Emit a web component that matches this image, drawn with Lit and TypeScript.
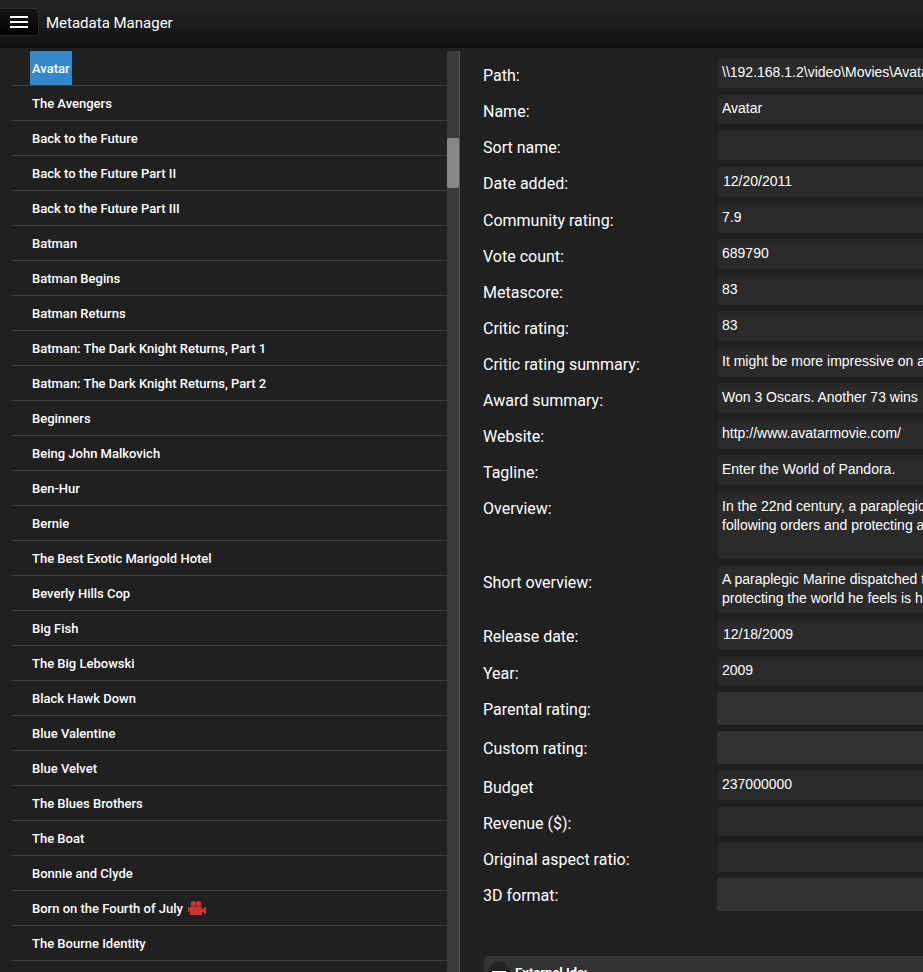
import { LitElement, html, css, nothing } from "lit";
import { customElement } from "lit/decorators.js";

interface Movie {
  title: string;
  missingTrailer?: boolean;
}

interface Field {
  id: string;
  label: string;
  kind: "text" | "date" | "select" | "long" | "short";
  value?: string;
}

const MOVIES: Movie[] = [
  { title: "Avatar" },
  { title: "The Avengers" },
  { title: "Back to the Future" },
  { title: "Back to the Future Part II" },
  { title: "Back to the Future Part III" },
  { title: "Batman" },
  { title: "Batman Begins" },
  { title: "Batman Returns" },
  { title: "Batman: The Dark Knight Returns, Part 1" },
  { title: "Batman: The Dark Knight Returns, Part 2" },
  { title: "Beginners" },
  { title: "Being John Malkovich" },
  { title: "Ben-Hur" },
  { title: "Bernie" },
  { title: "The Best Exotic Marigold Hotel" },
  { title: "Beverly Hills Cop" },
  { title: "Big Fish" },
  { title: "The Big Lebowski" },
  { title: "Black Hawk Down" },
  { title: "Blue Valentine" },
  { title: "Blue Velvet" },
  { title: "The Blues Brothers" },
  { title: "The Boat" },
  { title: "Bonnie and Clyde" },
  { title: "Born on the Fourth of July", missingTrailer: true },
  { title: "The Bourne Identity" },
];

const FIELDS: Field[] = [
  { id: "path", label: "Path:", kind: "text", value: "\\\\192.168.1.2\\video\\Movies\\Avatar" },
  { id: "name", label: "Name:", kind: "text", value: "Avatar" },
  { id: "sort", label: "Sort name:", kind: "text" },
  { id: "added", label: "Date added:", kind: "date", value: "12/20/2011" },
  { id: "community", label: "Community rating:", kind: "text", value: "7.9" },
  { id: "votes", label: "Vote count:", kind: "text", value: "689790" },
  { id: "metascore", label: "Metascore:", kind: "text", value: "83" },
  { id: "critic", label: "Critic rating:", kind: "text", value: "83" },
  { id: "summary", label: "Critic rating summary:", kind: "text", value: "It might be more impressive on a" },
  { id: "awards", label: "Award summary:", kind: "text", value: "Won 3 Oscars. Another 73 wins" },
  { id: "website", label: "Website:", kind: "text", value: "http://www.avatarmovie.com/" },
  { id: "tagline", label: "Tagline:", kind: "text", value: "Enter the World of Pandora." },
  {
    id: "overview",
    label: "Overview:",
    kind: "long",
    value:
      "In the 22nd century, a paraplegic Marine dispatched to the moon Pandora on a unique mission becomes torn between following orders and protecting an alien civilization.",
  },
  {
    id: "short",
    label: "Short overview:",
    kind: "short",
    value:
      "A paraplegic Marine dispatched to the moon Pandora on a unique mission becomes torn between following orders and protecting the world he feels is his home.",
  },
  { id: "release", label: "Release date:", kind: "date", value: "12/18/2009" },
  { id: "year", label: "Year:", kind: "text", value: "2009" },
  { id: "parental", label: "Parental rating:", kind: "select" },
  { id: "custom", label: "Custom rating:", kind: "select" },
  { id: "budget", label: "Budget", kind: "text", value: "237000000" },
  { id: "revenue", label: "Revenue ($):", kind: "text" },
  { id: "aspect", label: "Original aspect ratio:", kind: "text" },
  { id: "format", label: "3D format:", kind: "select" },
];

@customElement("top-bar")
class TopBar extends LitElement {
  static styles = css`
    :host {
      display: flex;
      align-items: flex-start;
      box-sizing: border-box;
      height: 48px;
      padding-top: 8px;
      gap: 7px;
      background: linear-gradient(#262626, #111);
    }
    .menu {
      display: flex;
      align-items: center;
      justify-content: center;
      box-sizing: border-box;
      width: 39px;
      height: 28px;
      padding: 0;
      border: 1px solid #2a2a2a;
      border-left: 0;
      border-radius: 0 3px 3px 0;
      background: linear-gradient(#151515, #020202);
      color: #fff;
    }
    .title {
      margin: 0;
      font-size: 15px;
      line-height: 30px;
      font-weight: 400;
    }
  `;

  render() {
    return html`
      <button class="menu" aria-label="Menu">
        <svg width="18" height="12" viewBox="0 0 18 12" aria-hidden="true">
          <path d="M0 0h18v2H0zM0 5h18v2H0zM0 10h18v2H0z" fill="currentColor" />
        </svg>
      </button>
      <h1 class="title">Metadata Manager</h1>
    `;
  }
}

@customElement("movie-tree")
class MovieTree extends LitElement {
  static styles = css`
    :host {
      display: flex;
      box-sizing: border-box;
      margin-top: 3px;
      padding-left: 12px;
      border-right: 1px solid #555;
      min-height: 0;
    }
    .list {
      flex: 1;
      margin: 0;
      padding: 0;
      list-style: none;
      overflow: hidden;
    }
    .item {
      display: flex;
      align-items: center;
      box-sizing: border-box;
      height: 35px;
      padding-left: 18px;
      border-bottom: 1px solid #404040;
    }
    .link {
      display: flex;
      align-items: center;
      gap: 5px;
      height: 34px;
      padding: 0 2px;
      color: #fff;
      font-size: 13px;
      font-weight: 500;
      text-decoration: none;
      white-space: nowrap;
    }
    .selected {
      background: #38c;
    }
    .track {
      width: 12px;
      background: #3b3b3b;
    }
    .thumb {
      height: 50px;
      margin-top: 87px;
      border-radius: 2px;
      background: #888;
    }
  `;

  render() {
    return html`
      <ul class="list">
        ${MOVIES.map(
          (m, i) => html`<li class="item">
            <a class=${i === 0 ? "link selected" : "link"} href="#"
              >${m.title}${m.missingTrailer
                ? html`<svg width="18" height="14" viewBox="0 0 18 14" role="img" aria-label="Video">
                    <g fill="#cc3333">
                      <circle cx="5.300" cy="2.800" r="2.700" />
                      <circle cx="10.700" cy="2.800" r="2.700" />
                      <path d="M2 5.500h12V8h1l2-2h1v7h-1l-2-2h-1v3H2v-4H1v1H0V6h1v1h1z" />
                    </g>
                  </svg>`
                : nothing}</a
            >
          </li>`
        )}
      </ul>
      <div class="track"><div class="thumb"></div></div>
    `;
  }
}

@customElement("item-editor")
class ItemEditor extends LitElement {
  static styles = css`
    :host {
      display: block;
      min-width: 0;
      overflow: hidden;
    }
    .form {
      box-sizing: border-box;
      min-width: 1020px;
      padding: 9px 16px 0 23px;
    }
    .row {
      display: grid;
      grid-template-columns: 233px 1fr;
      align-items: start;
    }
    .label {
      padding-top: 3px;
      font-size: 16px;
      line-height: 32px;
    }
    .control {
      box-sizing: border-box;
      width: 100%;
      height: 32px;
      margin: 0 0 4px;
      padding: 0 5px 2px;
      border: 1px solid #1e1e1e;
      border-radius: 4px;
      outline: 0;
      background: #2a2a2a;
      box-shadow: inset 0 1px 3px rgba(0, 0, 0, 0.2);
      color: #fff;
      font-family: "Liberation Sans", Arial, sans-serif;
      font-size: 14px;
      line-height: 19px;
      resize: none;
      overflow: hidden;
      display: block;
    }
    .date {
      height: 33px;
      padding-left: 6px;
    }
    .select {
      height: 35px;
      appearance: none;
      background: #333;
      box-shadow: none;
    }
    .long {
      height: 70px;
      padding-top: 6px;
    }
    .short {
      height: 50px;
      padding-top: 5px;
    }
    .section {
      display: flex;
      align-items: flex-start;
      box-sizing: border-box;
      width: 100%;
      height: 34px;
      margin: 40px 0 0 1px;
      padding: 6px 4px;
      gap: 5px;
      border: 0;
      border-radius: 4px;
      background: #333;
      color: #fff;
      font-family: Roboto, sans-serif;
      font-size: 13px;
      font-weight: 700;
      line-height: 22px;
      text-align: left;
    }
    .badge {
      display: flex;
      align-items: center;
      justify-content: center;
      width: 22px;
      height: 22px;
      border-radius: 50%;
      background: #222;
    }
  `;

  private control(f: Field) {
    if (f.kind === "select")
      return html`<select class="control select" id=${f.id}><option></option></select>`;
    if (f.kind === "long" || f.kind === "short")
      return html`<textarea class="control ${f.kind}" id=${f.id} .value=${f.value ?? ""}></textarea>`;
    return html`<input class="control ${f.kind}" id=${f.id} type="text" .value=${f.value ?? ""} />`;
  }

  render() {
    return html`
      <form class="form">
        ${FIELDS.map(
          (f) => html`<div class="row">
            <label class="label" for=${f.id}>${f.label}</label>
            ${this.control(f)}
          </div>`
        )}
        <button class="section" type="button">
          <span class="badge">
            <svg width="14" height="14" viewBox="0 0 14 14" aria-hidden="true">
              <path d="M0 5h14v4H0z" fill="#fff" />
            </svg>
          </span>
          <span>External Ids:</span>
        </button>
      </form>
    `;
  }
}

@customElement("app-root")
class AppRoot extends LitElement {
  static styles = css`
    :host {
      display: grid;
      grid-template-rows: auto minmax(0, 1fr);
      height: 100vh;
      overflow: hidden;
      background: #202020;
      color: #fff;
      font-family: Roboto, sans-serif;
    }
    .body {
      display: grid;
      grid-template-columns: minmax(0, 460fr) minmax(0, 463fr);
      min-height: 0;
    }
  `;

  render() {
    return html`
      <top-bar></top-bar>
      <div class="body">
        <movie-tree></movie-tree>
        <item-editor></item-editor>
      </div>
    `;
  }
}
